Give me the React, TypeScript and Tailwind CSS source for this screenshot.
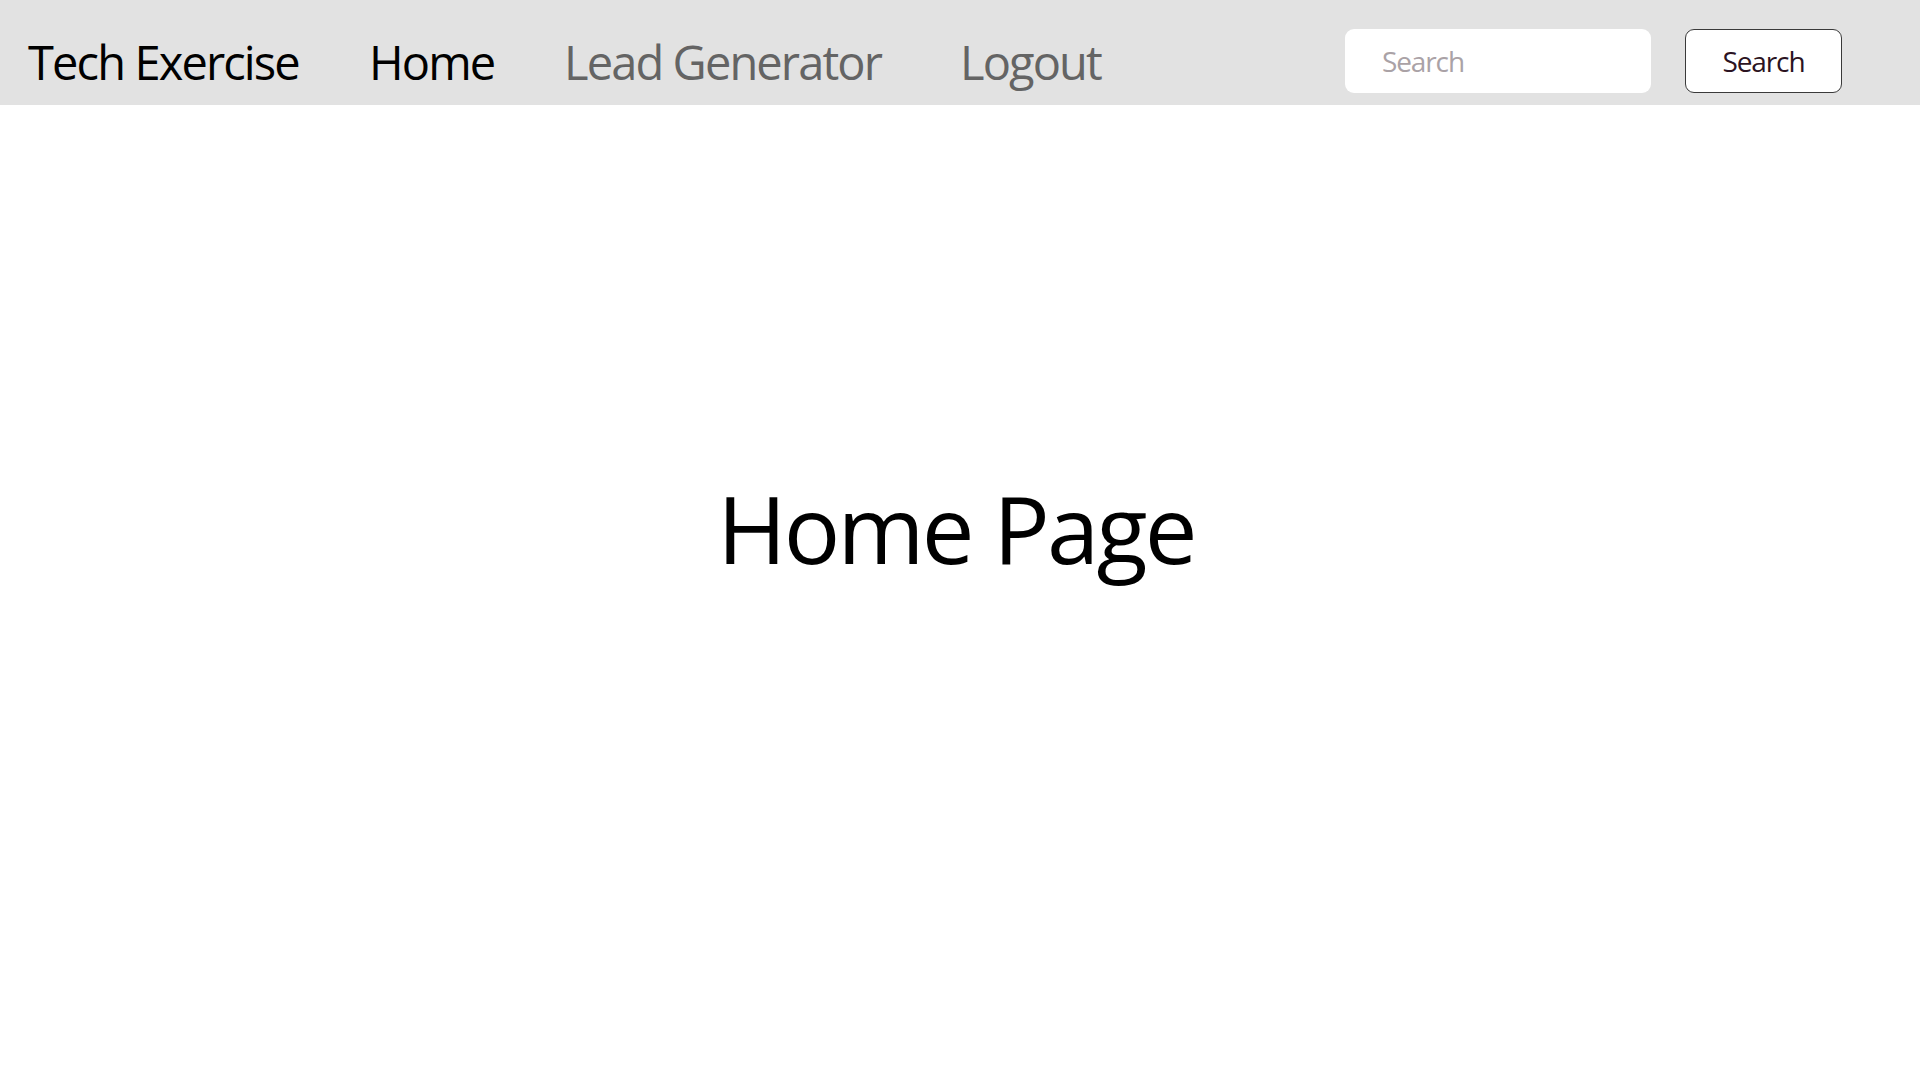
import { useState } from 'react';

const links = [
  { label: 'Home', active: true, width: 'w-[195px]' },
  { label: 'Lead Generator', active: false, width: 'w-[396px]' },
  { label: 'Logout', active: false, width: 'w-[200px]' },
];

export default function App() {
  const [query, setQuery] = useState('');

  return (
    <div className="min-h-screen w-full bg-white font-['Open_Sans',sans-serif]">
      {/* Top navigation */}
      <nav className="flex h-[105px] items-center justify-between bg-[#e2e2e2] pl-[28px] pr-[78px]">
        <div className="flex items-center pt-[20px]">
          <a href="#" className="w-[341px] text-[47px] leading-none tracking-[-0.04em] text-black">
            Tech Exercise
          </a>
          {links.map((link) => (
            <a
              key={link.label}
              href="#"
              className={`${link.width} text-[47px] leading-none tracking-[-0.04em] ${
                link.active ? 'text-black' : 'text-[#646464]'
              }`}
            >
              {link.label}
            </a>
          ))}
        </div>

        <form className="mt-[17px] flex items-center gap-[34px]" onSubmit={(e) => e.preventDefault()}>
          <input
            type="text"
            value={query}
            onChange={(e) => setQuery(e.target.value)}
            placeholder="Search"
            className="h-[64px] w-[306px] rounded-[9px] bg-white pl-[37px] text-[28px] tracking-[-0.04em] text-black outline-none placeholder:text-[#aaa2a6]"
          />
          <button
            type="submit"
            className="h-[64px] w-[157px] rounded-[9px] border border-[#3a3a3a] bg-white text-[28px] tracking-[-0.04em] text-[#2b1322]"
          >
            Search
          </button>
        </form>
      </nav>

      {/* Page body */}
      <main className="flex justify-center pr-[8px] pt-[376px]">
        <h1 className="text-[94px] font-normal leading-none tracking-[-0.03em] text-black">Home Page</h1>
      </main>
    </div>
  );
}
